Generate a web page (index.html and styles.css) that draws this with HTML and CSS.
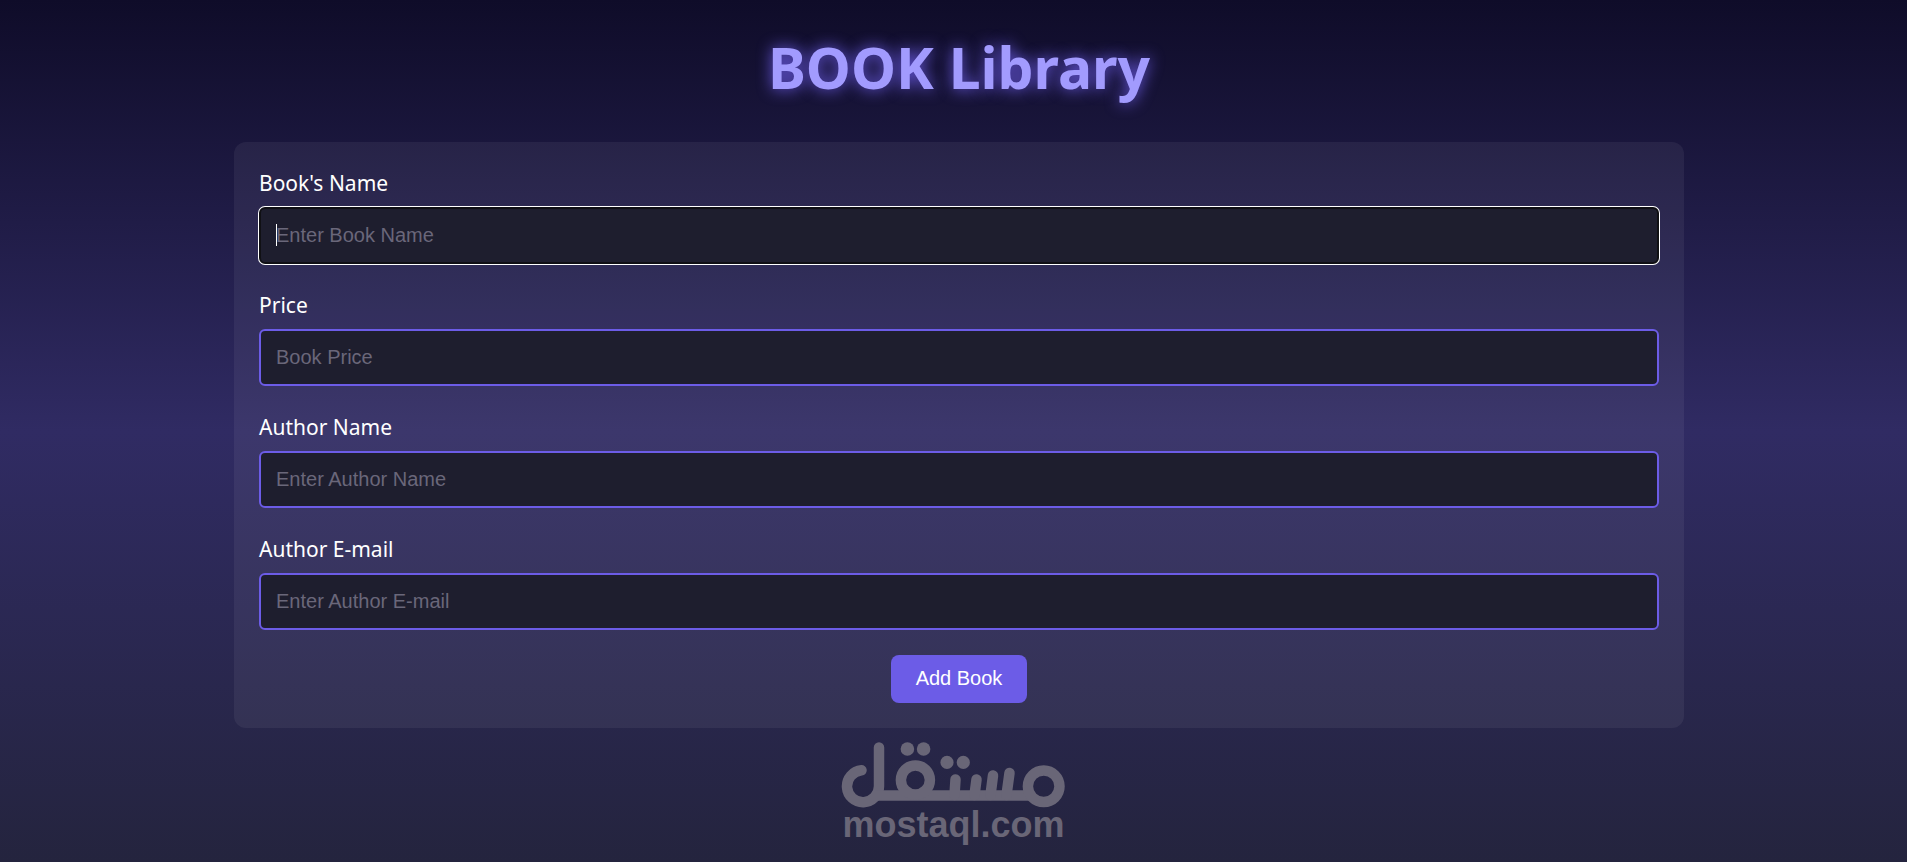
FILE: index.html
```html
<!DOCTYPE html>
<html lang="en">
<head>
  <meta charset="UTF-8" />
  <meta name="viewport" content="width=device-width, initial-scale=1.0"/>
  <title>BOOK Library</title>
  <link rel="stylesheet" href="styles.css">
</head>
<body>
  <main class="page">
    <h1>BOOK Library</h1>

    <form class="book-form" id="bookForm">
      <div class="field">
        <label for="bookName">Book's Name</label>
        <input type="text" id="bookName" placeholder="Enter Book Name" autofocus />
      </div>
      <div class="field">
        <label for="bookPrice">Price</label>
        <input type="text" id="bookPrice" placeholder="Book Price" />
      </div>
      <div class="field">
        <label for="authorName">Author Name</label>
        <input type="text" id="authorName" placeholder="Enter Author Name" />
      </div>
      <div class="field">
        <label for="authorEmail">Author E-mail</label>
        <input type="email" id="authorEmail" placeholder="Enter Author E-mail" />
      </div>
      <button type="submit">Add Book</button>
    </form>
  </main>

  <footer class="brand">
    <svg class="brand-mark" viewBox="0 0 225 66" aria-hidden="true">
      <g fill="none" stroke="currentColor" stroke-width="10.5" stroke-linecap="round">
        <path d="M20.500 28.3 A16 16 0 1 0 38 44 V5.5" />
        <path d="M35 53.5 H190" stroke-linecap="butt" />
        <circle cx="74.4" cy="38" r="14.5" />
        <circle cx="202.7" cy="44.3" r="15.8" />
        <path d="M114.5 37.5 L113.5 53 M135.5 37.5 L133.5 53 M152 33.5 L149.5 53 M168.5 31 L165.5 53" />
      </g>
      <g fill="currentColor">
        <circle cx="66.4" cy="7" r="6.8" />
        <circle cx="82.6" cy="7" r="6.8" />
        <circle cx="106" cy="20.4" r="6.6" />
        <circle cx="122.3" cy="20.4" r="6.6" />
      </g>
    </svg>
    <span class="brand-name">mostaql.com</span>
  </footer>
</body>
</html>
```
FILE: styles.css
```css
* {
  box-sizing: border-box;
}
body {
  margin: 0;
  min-height: 100vh;
  background: linear-gradient(to bottom, #0f0c29, #302b63, #24243e);
  color: white;
  font-family: 'Segoe UI', 'Noto Sans', sans-serif;
}
.page {
  display: flex;
  flex-direction: column;
  align-items: center;
  padding: 28px 0 0 11px;
}
h1 {
  margin: 0 0 36px;
  font-size: 57px;
  line-height: 78px;
  font-weight: 700;
  color: #a29bfe;
  text-shadow: 0 0 15px #6c5ce7;
}
.book-form {
  display: flex;
  flex-direction: column;
  align-items: center;
  gap: 25px;
  width: 90%;
  max-width: 1450px;
  padding: 25px;
  background: rgba(255, 255, 255, 0.06);
  border-radius: 12px;
}
.field {
  display: flex;
  flex-direction: column;
  gap: 8px;
  width: 100%;
}
label {
  font-size: 21px;
  line-height: 32px;
}
input {
  width: 100%;
  height: 57px;
  padding: 15px;
  font-family: Arial, 'Liberation Sans', sans-serif;
  font-size: 20px;
  color: white;
  background: #1e1e2e;
  border: 2px solid #6c5ce7;
  border-radius: 6px;
}
input::placeholder {
  color: #6a677a;
}
input:focus {
  outline: none;
  border-color: #101014;
  box-shadow: 0 0 0 1px white;
}
/* steady cursor while the field is empty */
input:focus:placeholder-shown {
  caret-color: transparent;
  background: linear-gradient(white, white) 15px 15px / 1px 22px no-repeat #1e1e2e;
}
button {
  padding: 11px 25px 13px;
  font-family: Arial, 'Liberation Sans', sans-serif;
  font-size: 20px;
  line-height: 24px;
  color: white;
  background: #6c5ce7;
  border: none;
  border-radius: 8px;
  cursor: pointer;
}
.brand {
  display: flex;
  flex-direction: column;
  align-items: center;
  margin-top: 14px;
  color: #696677;
}
.brand-mark {
  width: 225px;
  height: 66px;
}
.brand-name {
  font-family: Arial, 'Liberation Sans', sans-serif;
  font-size: 36px;
  line-height: 34px;
  font-weight: 700;
}
```
